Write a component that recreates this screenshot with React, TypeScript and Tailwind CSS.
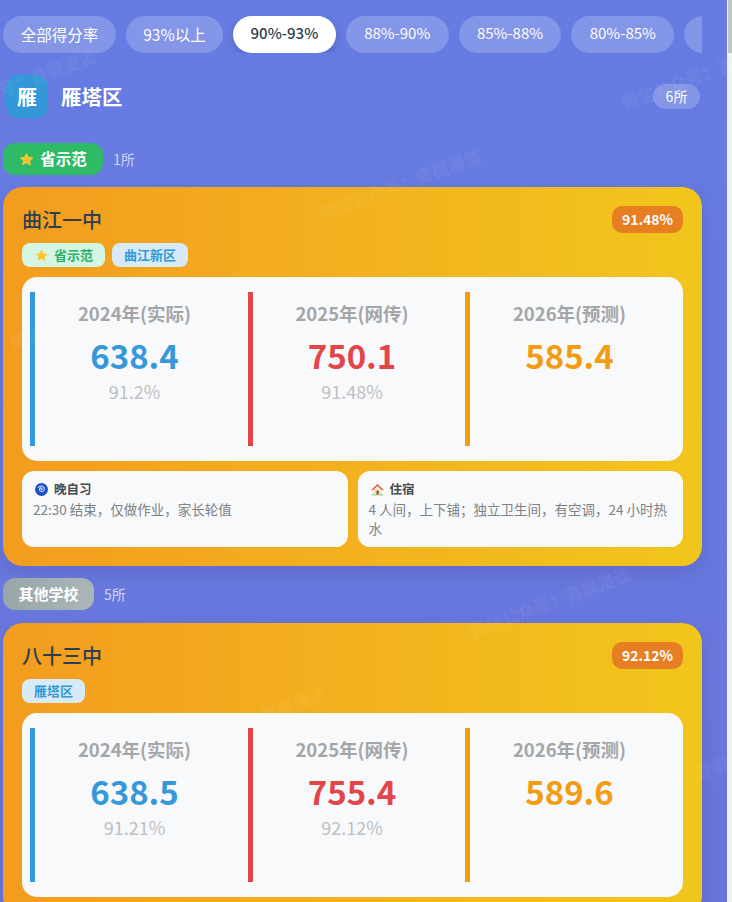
import React from 'react';

const filters = ['全部得分率', '93%以上', '90%-93%', '88%-90%', '85%-88%', '80%-85%', ''];

// start points of the faint diagonal watermark
const marks = [
  { x: 320, y: 200 },
  { x: 622, y: 90 },
  { x: -65, y: 100 },
  { x: 470, y: 618 },
  { x: 165, y: 738 },
  { x: 600, y: 795 },
  { x: 10, y: 330 },
];

const StarIcon = ({ size }: { size: number }) => (
  <svg width={size} height={size} viewBox="0 0 24 24" className="shrink-0">
    <path
      d="M12 2.2l3 6.4 7 .9-5.100 4.800 1.300 6.900L12 16.900l-6.200 3.400 1.300-6.900L2 9.500l7-.9z"
      fill="#fbc531"
      stroke="#fbc531"
      strokeWidth="1.500"
      strokeLinejoin="round"
    />
  </svg>
);

const CycloneIcon = () => (
  <svg width="13" height="13" viewBox="0 0 24 24" className="shrink-0">
    <circle cx="12" cy="12" r="12" fill="#1f4fc0" />
    <path
      d="M12 12c1.800-.6 1.200-3-.8-3-2.500 0-3.700 3-2.200 5 1.800 2.500 6 2.300 7.600-.6 1.600-3-.1-7-3.600-7.800-2.700-.6-5.200.3-6.800 2.400"
      fill="none"
      stroke="#d6e4fb"
      strokeWidth="1.900"
      strokeLinecap="round"
    />
  </svg>
);

const HouseIcon = () => (
  <svg width="13" height="13" viewBox="0 0 24 24" className="shrink-0">
    <rect x="2" y="20" width="20" height="3" fill="#8fd9a0" />
    <rect x="5" y="10" width="14" height="11" fill="#f3e2c4" />
    <rect x="10" y="14" width="4.500" height="7" fill="#8a5a33" />
    <path d="M12 2L1 12.500l1.800 1.500L12 5.500l9.200 8.500 1.800-1.500z" fill="#e2503f" />
  </svg>
);

type Stat = { label: string; value: string; rate?: string; bar: string; color: string };

const StatCol = ({ label, value, rate, bar, color }: Stat) => (
  <div className={`flex flex-col items-center border-l-[5px] h-[154px] ${bar}`}>
    <div className="text-[18.500px] leading-[26px] font-semibold text-[#a3a6a9] mt-2">{label}</div>
    <div className={`text-[33px] leading-[44px] font-bold mt-[7px] ${color}`}>{value}</div>
    {rate && <div className="text-[18px] leading-[26px] text-[#bcc0c4] mt-[1px]">{rate}</div>}
  </div>
);

const Stats = ({ items }: { items: Stat[] }) => (
  <div className="grid grid-cols-[204px_204px_204px] gap-x-[13.500px] pl-2 py-[15px] h-[184px] rounded-[15px] bg-[#f8f9fb]">
    {items.map((s) => (
      <StatCol key={s.label} {...s} />
    ))}
  </div>
);

const Tag = ({ children, green }: { children: React.ReactNode; green?: boolean }) => (
  <span
    className={`inline-flex items-center h-6 rounded-lg text-[13px] font-semibold ${
      green ? 'gap-[6px] pl-[13px] pr-3 bg-[#d5f5e3] text-[#2bb166]' : 'px-3 bg-[#d6eaf8] text-[#3498db]'
    }`}
  >
    {children}
  </span>
);

const Card = ({
  name,
  score,
  tags,
  stats,
  children,
}: {
  name: string;
  score: string;
  tags: React.ReactNode;
  stats: Stat[];
  children?: React.ReactNode;
}) => (
  <div className="rounded-[20px] bg-gradient-to-r from-[#f39c1f] to-[#f1c61c] p-[19px] shadow-[0_6px_18px_rgba(50,50,120,0.18)]">
    <div className="flex items-center justify-between h-[27px]">
      <h3 className="text-[20px] leading-[25px] font-medium text-[#2f3e4e]">{name}</h3>
      <span className="flex items-center h-[27px] px-[10px] rounded-[10px] bg-[#e67e22] text-white text-[14px] font-semibold">
        {score}
      </span>
    </div>
    <div className="flex gap-[7px] my-[10px]">{tags}</div>
    <Stats items={stats} />
    {children}
  </div>
);

const Info = ({ icon, title, text }: { icon: React.ReactNode; title: string; text: string }) => (
  <div className="rounded-xl bg-[#f8f9fb] h-[76px] px-[11px] pt-[9px]">
    <div className="flex items-center gap-[6px] pl-[2px] text-[12.500px] leading-[18px] font-semibold text-[#444a50]">
      {icon}
      {title}
    </div>
    <p className="text-[13.500px] leading-[19px] text-[#7d8285] mt-[2px]">{text}</p>
  </div>
);

const blue = 'border-[#3498db]';
const red = 'border-[#e24648]';
const orange = 'border-[#f39c12]';

export default function App() {
  return (
    <div
      className="relative flex h-[902px] w-[732px] overflow-hidden text-white"
      style={{ fontFamily: '"Noto Sans CJK SC", "Noto Sans", sans-serif' }}
    >
      <main className="w-[727px] h-full overflow-hidden bg-gradient-to-b from-[#667ce2] to-[#6a75dc] pl-[3px] pr-[25px] pt-4">
        {/* Filter pills */}
        <div className="flex gap-[10px] overflow-hidden">
          {filters.map((f, i) => (
            <span
              key={f || 'more'}
              className={`shrink-0 flex items-center justify-center h-[37px] rounded-[19px] ${
                i < 2 ? 'text-[15.500px]' : 'text-[15px] pb-[2px]'
              } ${
                f === '90%-93%'
                  ? 'w-[102.800px] bg-white text-[#2c3e50] font-medium shadow-[0_3px_8px_rgba(40,40,90,0.25)]'
                  : f === '全部得分率'
                    ? 'w-[113px] bg-white/20'
                    : f === '93%以上'
                      ? 'w-[97px] bg-white/20'
                      : 'w-[102.800px] bg-white/20'
              }`}
            >
              {f}
            </span>
          ))}
        </div>

        {/* District header */}
        <div className="flex items-center mt-[22px] pl-[3px] h-[43px]">
          <div className="flex items-center justify-center w-[42px] h-[43px] rounded-xl bg-[#3398d8] text-[20px] font-bold">
            雁
          </div>
          <h2 className="ml-[13px] text-[20.500px] font-bold">雁塔区</h2>
          <span className="ml-auto mr-[2px] flex items-center justify-center w-[47px] h-[25px] rounded-[13px] bg-white/20 text-[14px]">
            6所
          </span>
        </div>

        {/* 省示范 */}
        <div className="flex items-center gap-[10px] mt-[25px] h-8">
          <span className="flex items-center justify-center gap-[6px] w-[100px] h-8 rounded-xl bg-[#2fba66] text-[15.500px] font-semibold">
            <StarIcon size={15} />
            省示范
          </span>
          <span className="text-[14px] text-white/70">1所</span>
        </div>

        <div className="mt-3">
          <Card
            name="曲江一中"
            score="91.48%"
            tags={
              <>
                <Tag green>
                  <StarIcon size={13} />
                  省示范
                </Tag>
                <Tag>曲江新区</Tag>
              </>
            }
            stats={[
              { label: '2024年(实际)', value: '638.4', rate: '91.2%', bar: blue, color: 'text-[#3498db]' },
              { label: '2025年(网传)', value: '750.1', rate: '91.48%', bar: red, color: 'text-[#e24648]' },
              { label: '2026年(预测)', value: '585.4', bar: orange, color: 'text-[#f39c12]' },
            ]}
          >
            <div className="grid grid-cols-2 gap-[10px] mt-[10px]">
              <Info icon={<CycloneIcon />} title="晚自习" text="22:30 结束，仅做作业，家长轮值" />
              <Info icon={<HouseIcon />} title="住宿" text="4 人间，上下铺；独立卫生间，有空调，24 小时热水" />
            </div>
          </Card>
        </div>

        {/* 其他学校 */}
        <div className="flex items-center gap-[10px] mt-3 h-8">
          <span className="flex items-center justify-center w-[91px] h-8 rounded-xl bg-gradient-to-r from-[#98a6a8] to-[#aab5b8] text-[15px] font-semibold">
            其他学校
          </span>
          <span className="text-[14px] text-white/70">5所</span>
        </div>

        <div className="mt-[13px]">
          <Card
            name="八十三中"
            score="92.12%"
            tags={<Tag>雁塔区</Tag>}
            stats={[
              { label: '2024年(实际)', value: '638.5', rate: '91.21%', bar: blue, color: 'text-[#3498db]' },
              { label: '2025年(网传)', value: '755.4', rate: '92.12%', bar: red, color: 'text-[#e24648]' },
              { label: '2026年(预测)', value: '589.6', bar: orange, color: 'text-[#f39c12]' },
            ]}
          />
        </div>
      </main>

      {/* Scrollbar */}
      <div className="w-[5px] h-full bg-[#f1f1ee]">
        <div className="ml-[1px] h-[53px] bg-[#c4c4c2]" />
      </div>

      {/* Watermarks over the page */}
      {marks.map((m) => (
        <div
          key={`${m.x}-${m.y}`}
          className="absolute pointer-events-none -rotate-[20deg] origin-left text-[17px] font-bold text-white/[0.06] whitespace-nowrap blur-[0.5px]"
          style={{ left: m.x, top: m.y }}
        >
          微信公众号：青枫漫谈
        </div>
      ))}
    </div>
  );
}
